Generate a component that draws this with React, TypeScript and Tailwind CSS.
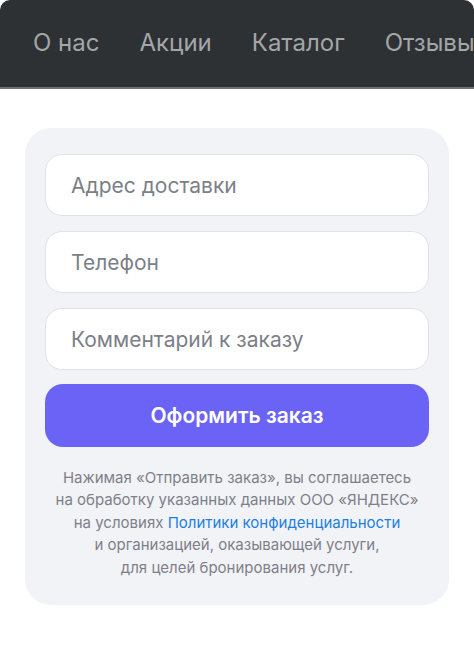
export default function App() {
    const nav = ['О нас', 'Акции', 'Каталог', 'Отзывы'];
    const fields = ['Адрес доставки', 'Телефон', 'Комментарий к заказу'];

    return (
        <div className="min-h-[653px] w-[474px] overflow-hidden bg-white font-['Inter',sans-serif]">
            {/* Top menu */}
            <header className="h-[89px] rounded-t-[10px] border-b-2 border-[#6f7072] bg-[#2e3134]">
                <nav className="flex h-full items-center gap-[40px] whitespace-nowrap pl-[33px] pb-[2px]">
                    {nav.map((item) => (
                        <span key={item} className="text-[24px] text-[#a4a6a8]">
                            {item}
                        </span>
                    ))}
                </nav>
            </header>

            {/* Order form */}
            <div className="px-[25px] pt-[39px]">
                <form className="flex flex-col rounded-[26px] bg-[#f2f3f7] px-[20px] pt-[26px] pb-[26px]">
                    <div className="flex flex-col gap-[15px]">
                        {fields.map((f) => (
                            <input
                                key={f}
                                placeholder={f}
                                className="h-[62px] w-full rounded-[17px] border border-[#e1e2e8] bg-white px-[25px] text-[21px] text-[#222] outline-none placeholder:text-[#7c7f88]"
                            />
                        ))}
                    </div>
                    <button
                        type="button"
                        className="mt-[14px] h-[63px] w-full rounded-[18px] bg-[#6a63f6] text-[21px] font-semibold text-white"
                    >
                        Оформить заказ
                    </button>
                    <p className="mt-[20px] text-center text-[15px] leading-[22.4px] text-[#7e8089]">
                        Нажимая «Отправить заказ», вы соглашаетесь
                        <br />
                        на обработку указанных данных ООО «ЯНДЕКС»
                        <br />
                        на условиях <a className="text-[#1b7fe3]">Политики конфиденциальности</a>
                        <br />
                        и организацией, оказывающей услуги,
                        <br />
                        для целей бронирования услуг.
                    </p>
                </form>
            </div>
        </div>
    );
}
